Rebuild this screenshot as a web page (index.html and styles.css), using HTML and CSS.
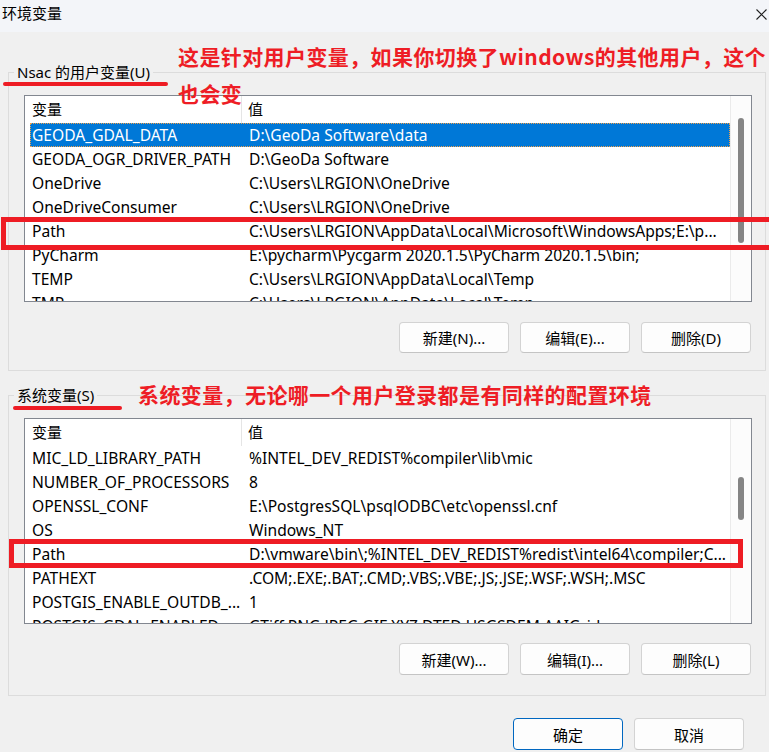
FILE: index.html
```html
<!DOCTYPE html>
<html lang="zh-CN">
<head>
<meta charset="utf-8">
<title>环境变量</title>
<link rel="stylesheet" href="styles.css">
</head>
<body>
<div class="window">
  <div class="titlebar">
    <span class="title">环境变量</span>
    <svg class="close" width="11" height="11" viewBox="0 0 11 11"><path d="M0.5 0.5L10.5 10.5M10.5 0.5L0.5 10.5" stroke="#1f1f1f" stroke-width="1.1" fill="none"/></svg>
  </div>
  <div class="body">
    <fieldset class="group group-user">
      <legend>Nsac 的用户变量(U)</legend>
      <div class="listbox">
        <div class="list-main">
          <div class="list-head"><div class="hcol1">变量</div><div class="hcol2">值</div></div>
          <div class="row sel"><span class="c1">GEODA_GDAL_DATA</span><span class="c2">D:\GeoDa Software\data</span></div>
          <div class="row"><span class="c1">GEODA_OGR_DRIVER_PATH</span><span class="c2">D:\GeoDa Software</span></div>
          <div class="row"><span class="c1">OneDrive</span><span class="c2">C:\Users\LRGION\OneDrive</span></div>
          <div class="row"><span class="c1">OneDriveConsumer</span><span class="c2">C:\Users\LRGION\OneDrive</span></div>
          <div class="row"><span class="c1">Path</span><span class="c2">C:\Users\LRGION\AppData\Local\Microsoft\WindowsApps;E:\p...</span></div>
          <div class="row"><span class="c1">PyCharm</span><span class="c2">E:\pycharm\Pycgarm 2020.1.5\PyCharm 2020.1.5\bin;</span></div>
          <div class="row"><span class="c1">TEMP</span><span class="c2">C:\Users\LRGION\AppData\Local\Temp</span></div>
          <div class="row"><span class="c1">TMP</span><span class="c2">C:\Users\LRGION\AppData\Local\Temp</span></div>
        </div>
        <div class="scrollbar"><div class="thumb" style="margin-top:22px;height:125px"></div></div>
      </div>
      <div class="btns">
        <button class="btn">新建(N)...</button>
        <button class="btn">编辑(E)...</button>
        <button class="btn">删除(D)</button>
      </div>
    </fieldset>

    <fieldset class="group group-sys">
      <legend>系统变量(S)</legend>
      <div class="listbox">
        <div class="list-main">
          <div class="list-head"><div class="hcol1">变量</div><div class="hcol2">值</div></div>
          <div class="row"><span class="c1">MIC_LD_LIBRARY_PATH</span><span class="c2">%INTEL_DEV_REDIST%compiler\lib\mic</span></div>
          <div class="row"><span class="c1">NUMBER_OF_PROCESSORS</span><span class="c2">8</span></div>
          <div class="row"><span class="c1">OPENSSL_CONF</span><span class="c2">E:\PostgresSQL\psqlODBC\etc\openssl.cnf</span></div>
          <div class="row"><span class="c1">OS</span><span class="c2">Windows_NT</span></div>
          <div class="row"><span class="c1">Path</span><span class="c2">D:\vmware\bin\;%INTEL_DEV_REDIST%redist\intel64\compiler;C...</span></div>
          <div class="row"><span class="c1">PATHEXT</span><span class="c2">.COM;.EXE;.BAT;.CMD;.VBS;.VBE;.JS;.JSE;.WSF;.WSH;.MSC</span></div>
          <div class="row"><span class="c1">POSTGIS_ENABLE_OUTDB_...</span><span class="c2">1</span></div>
          <div class="row"><span class="c1">POSTGIS_GDAL_ENABLED_...</span><span class="c2">GTiff PNG JPEG GIF XYZ DTED USGSDEM AAIGrid</span></div>
        </div>
        <div class="scrollbar"><div class="thumb" style="margin-top:58px;height:43px"></div></div>
      </div>
      <div class="btns">
        <button class="btn">新建(W)...</button>
        <button class="btn">编辑(I)...</button>
        <button class="btn">删除(L)</button>
      </div>
    </fieldset>

    <div class="footer">
      <button class="btn primary">确定</button>
      <button class="btn">取消</button>
    </div>
  </div>

  <div class="note note-user">这是针对用户变量，如果你切换了windows的其他用户，这个<br>也会变</div>
  <div class="note note-sys">系统变量，无论哪一个用户登录都是有同样的配置环境</div>
  <div class="mark line-user"></div>
  <div class="mark line-sys"></div>
  <div class="mark box-user"></div>
  <div class="mark box-sys"></div>
</div>
</body>
</html>
```

FILE: styles.css
```css
* { box-sizing: border-box; }
html, body { margin: 0; padding: 0; }
body {
  width: 769px;
  height: 752px;
  overflow: hidden;
  background: #f0f0f0;
  font-family: "Noto Sans", "Noto Sans CJK SC", sans-serif;
  font-size: 15px;
  color: #000;
}
.window {
  position: relative;
  width: 769px;
  height: 752px;
  overflow: hidden;
}
.titlebar {
  height: 32px;
  background: #f3f5f9;
  display: flex;
  align-items: flex-start;
  justify-content: space-between;
  padding: 3px 2px 0 2px;
}
.title {
  font-family: "Noto Sans CJK SC", sans-serif;
  font-size: 15px;
  line-height: 20px;
}
.close { margin-top: 6px; margin-right: 0; }

.body { padding: 30px 3px 0 8px; }

.group {
  margin: 0;
  min-width: 0;
  border: 1px solid #dcdcdc;
  padding: 13px 13px 17px 15px;
}
.group + .group { margin-top: 14px; }
.group legend {
  margin-left: -10px;
  padding: 0 3px;
  font-size: 15px;
  line-height: 20px;
}

.listbox {
  height: 207px;
  border: 1px solid #828790;
  background: #fff;
  display: flex;
}
.group-sys .listbox { height: 206px; }
.list-main {
  flex: 1;
  overflow: hidden;
  min-width: 0;
}
.scrollbar {
  width: 21px;
  background: #fcfcfc;
  border-left: 1px solid #ebebeb;
  padding-left: 7px;
}
.thumb {
  width: 6px;
  background: #858585;
  border-radius: 3px;
}
.list-head {
  height: 27px;
  display: flex;
  line-height: 27px;
}
.hcol1 {
  width: 217px;
  padding-left: 7px;
  border-right: 1px solid #e5e5e5;
}
.hcol2 { padding-left: 6px; }

.row {
  height: 24px;
  margin-left: 5px;
  display: flex;
  border: 1px solid transparent;
  font-size: 15.6px;
  line-height: 22px;
  white-space: nowrap;
}
.row.sel {
  background: #0078d7;
  color: #fff;
  border: 1px dotted #f0a04b;
}
.c1 { width: 211px; flex: none; padding-left: 1px; overflow: hidden; }
.c2 { padding-left: 7px; }

.btns {
  display: flex;
  justify-content: flex-end;
  gap: 11px;
  margin-top: 20px;
  margin-right: 1px;
}
.group-sys .btns { margin-top: 19px; }
.group-sys { padding-bottom: 20px; }
.btn {
  width: 110px;
  height: 31px;
  border: 1px solid #d3d3d3;
  border-bottom-color: #c4c4c4;
  border-radius: 4px;
  background: #fdfdfd;
  font-family: "Noto Sans", "Noto Sans CJK SC", sans-serif;
  font-size: 15px;
  color: #000;
  padding: 0;
  display: flex;
  align-items: center;
  justify-content: center;
}
.group-sys .btn { height: 32px; }
.footer {
  display: flex;
  justify-content: flex-end;
  gap: 11px;
  margin-top: 22px;
  padding-right: 22px;
}
.footer .btn { height: 32px; }
.btn.primary { border-color: #0067c0; }

.note {
  position: absolute;
  color: #ee1d25;
  font-family: "Noto Sans CJK SC", sans-serif;
  font-weight: 700;
  font-size: 21px;
  letter-spacing: 0.4px;
  line-height: 37px;
  white-space: nowrap;
  z-index: 2;
}
.note-user { left: 178px; top: 38px; }
.note-sys { left: 138px; top: 376px; }

.mark { position: absolute; z-index: 3; }
.line-user {
  left: 3px; top: 82px; width: 165px; height: 4px;
  background: #ee1c24; border-radius: 2px;
}
.line-sys {
  left: 13px; top: 406px; width: 109px; height: 4px;
  background: #ee1c24; border-radius: 2px;
}
.box-user {
  left: 1px; top: 217px; width: 800px; height: 33px;
  border: 5px solid #ee1c24;
}
.box-sys {
  left: 9px; top: 539px; width: 734px; height: 29px;
  border: 5px solid #ee1c24;
}
```
